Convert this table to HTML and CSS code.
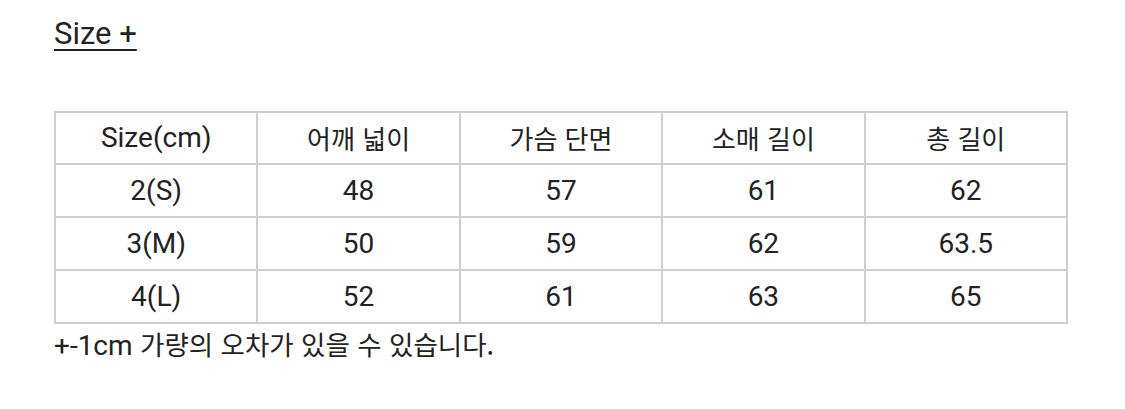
FILE: index.html
```html
<!DOCTYPE html>
<html lang="ko">
<head>
<meta charset="utf-8">
<link rel="stylesheet" href="styles.css">
</head>
<body>
<div class="page">
  <h2 class="title">Size +</h2>
  <table class="size-table">
    <tr class="head"><td>Size(cm)</td><td class="ko">어깨 넓이</td><td class="ko">가슴 단면</td><td class="ko">소매 길이</td><td class="ko">총 길이</td></tr>
    <tr><td>2(S)</td><td>48</td><td>57</td><td>61</td><td>62</td></tr>
    <tr><td>3(M)</td><td>50</td><td>59</td><td>62</td><td>63.5</td></tr>
    <tr><td>4(L)</td><td>52</td><td>61</td><td>63</td><td>65</td></tr>
  </table>
  <p class="note"><span class="latin">+-1cm</span> 가량의 오차가 있을 수 있습니다.</p>
</div>
</body>
</html>
```
FILE: styles.css
```css
html, body { margin: 0; padding: 0; background: #fff; }
body {
  font-family: Roboto, "Noto Sans CJK KR", sans-serif;
  color: #222;
}
.page { padding: 12px 0 0 54px; width: 1014px; }
.title {
  margin: 0;
  font-size: 31px;
  font-weight: 400;
  line-height: 44px;
  text-decoration: underline;
  text-decoration-thickness: 2px;
  text-underline-offset: 5px;
}
.size-table {
  margin-top: 55px;
  width: 1014px;
  border-collapse: collapse;
  table-layout: fixed;
}
.size-table td {
  border: 2px solid #cfcfcf;
  text-align: center;
  font-size: 28px;
  height: 51px;
  padding: 0;
  line-height: 1;
}
.size-table .head td { height: 50px; }
.size-table td.ko {
  font-family: "Noto Sans CJK KR", sans-serif;
  font-size: 26px;
}
.note {
  margin: 2px 0 0 0;
  font-family: "Noto Sans CJK KR", sans-serif;
  font-size: 26.5px;
  line-height: 36px;
}
.note .latin {
  font-family: Roboto, sans-serif;
  font-size: 28px;
}
```
